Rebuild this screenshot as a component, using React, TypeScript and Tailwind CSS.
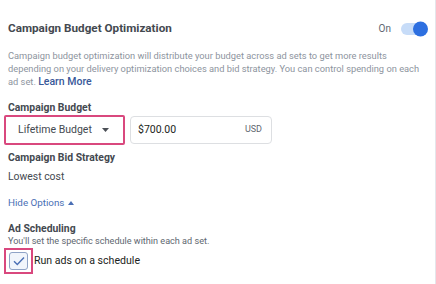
import React, { useState } from "react";

export default function App() {
  const [on, setOn] = useState(true);
  const [schedule, setSchedule] = useState(true);

  return (
    <div className="w-[436px] h-[284px] bg-white border-r border-[#e4e6eb] font-['Roboto','Liberation_Sans',sans-serif] text-[#444950] overflow-hidden">
      <div className="pl-2 pr-2 pt-[20px]">
        {/* Header */}
        <div className="flex items-center justify-between h-[17px]">
          <h2 className="text-[11.7px] font-bold text-[#444950]">Campaign Budget Optimization</h2>
          <div className="flex items-center gap-[10px] mr-0">
            <span className="text-[10px] text-[#606770]">On</span>
            <button
              onClick={() => setOn(!on)}
              className={`relative w-[26px] h-[12px] rounded-full ${on ? "bg-[#c7dcf8]" : "bg-[#dadde1]"}`}
            >
              <span className={`absolute top-1/2 -translate-y-1/2 w-[15px] h-[15px] rounded-full ${on ? "right-[-1px] bg-[#2d6fe0]" : "left-[-1px] bg-white border border-[#ccd0d5]"}`} />
            </button>
          </div>
        </div>

        {/* Description */}
        <p className="mt-[12px] text-[9.3px] leading-[13px] text-[#8d949e] whitespace-nowrap">
          Campaign budget optimization will distribute your budget across ad sets to get more results
          <br />
          depending on your delivery optimization choices and bid strategy. You can control spending on each
          <br />
          ad set. <a className="text-[#385898] font-medium text-[10.5px] leading-[13px]">Learn More</a>
        </p>

        {/* Campaign Budget */}
        <div className="mt-[13px] text-[10.4px] font-bold leading-[13px]">Campaign Budget</div>
        <div className="flex items-center gap-[5px] mt-[1px] -ml-[4px]">
          <div className="w-[121px] h-[30px] border-2 border-[#d9487e] rounded-[2px] flex items-center justify-between pl-[12px] pr-[14px] bg-white">
            <span className="text-[10.5px] text-[#444950] whitespace-nowrap">Lifetime Budget</span>
            <svg width="7" height="4" viewBox="0 0 7 4">
              <path d="M0 0h7L3.5 4z" fill="#4b4f56" />
            </svg>
          </div>
          <div className="w-[142px] h-[28px] border border-[#dddfe2] rounded-[4px] flex items-center justify-between pl-[7px] pr-[9px]">
            <span className="text-[10.5px] text-[#1c1e21]">$700.00</span>
            <span className="text-[9px] text-[#606770]">USD</span>
          </div>
        </div>

        {/* Bid Strategy */}
        <div className="mt-[6px] text-[10.4px] font-bold leading-[13px]">Campaign Bid Strategy</div>
        <div className="mt-[6px] text-[10.4px] leading-[14px] text-[#444950]">Lowest cost</div>

        {/* Hide options */}
        <div className="mt-[12px] flex items-center gap-[4px] text-[9.8px] leading-[14px] text-[#4a6fb5]">
          Hide Options
          <svg width="6" height="4" viewBox="0 0 6 4">
            <path d="M0 4h6L3 0z" fill="#4a6fb5" />
          </svg>
        </div>

        {/* Ad Scheduling */}
        <div className="mt-[12px] text-[10.4px] font-bold leading-[13px]">Ad Scheduling</div>
        <div className="text-[9.1px] leading-[12px] text-[#606770]">You'll set the specific schedule within each ad set.</div>
        <div className="flex items-center mt-[1px] -ml-[4px]">
          <button
            onClick={() => setSchedule(!schedule)}
            className="w-[29px] h-[26px] border-2 border-[#d9487e] flex items-center justify-center"
          >
            <span className="w-[19px] h-[18px] rounded-[3px] border border-[#8fa3c6] bg-[#f1f5fb] flex items-center justify-center">
              {schedule && (
                <svg width="12" height="10" viewBox="0 0 12 10">
                  <path d="M1 5.2l3.3 3.3L11 1.5" fill="none" stroke="#4a6fb5" strokeWidth="1.4" />
                </svg>
              )}
            </span>
          </button>
          <span className="ml-[1px] text-[10.6px] text-[#1c1e21]">Run ads on a schedule</span>
        </div>
      </div>
    </div>
  );
}
